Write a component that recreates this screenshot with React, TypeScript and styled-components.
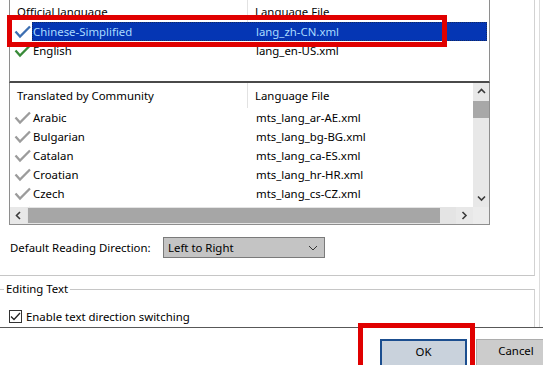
import React from "react";
import styled, { createGlobalStyle } from "styled-components";

const Global = createGlobalStyle`
  html, body { margin: 0; padding: 0; background: #ffffff; }
  body {
    font-family: "Noto Sans", "Open Sans", sans-serif;
    font-size: 11.4px;
    color: #000000;
  }
`;

const Root = styled.div`
  position: relative;
  width: 543px;
  height: 365px;
  overflow: hidden;
  background: #ffffff;
  display: flex;
  flex-direction: column;
`;

const Frame = styled.div`
  width: 540px;
  height: 327px;
  flex: none;
  box-sizing: border-box;
  border-right: 1px solid #dcdcdc;
  display: flex;
  flex-direction: column;
`;

const MainGroup = styled.div`
  width: 535px;
  height: 276px;
  flex: none;
  box-sizing: border-box;
  border-right: 1px solid #d2d2d2;
  border-bottom: 1px solid #c6c6c6;
  padding-left: 9px;
  display: flex;
  flex-direction: column;
`;

const ListBox = styled.div<{ $h: number; $thickBottom?: boolean }>`
  width: 481px;
  height: ${(p) => p.$h}px;
  flex: none;
  box-sizing: border-box;
  border-left: 1px solid #8e8e8e;
  border-right: 1px solid #8e8e8e;
  border-bottom: ${(p) => (p.$thickBottom ? "2px solid #4a4a4a" : "1px solid #8e8e8e")};
  display: flex;
  flex-direction: column;
  overflow: hidden;
  background: #ffffff;
`;

const HeaderRow = styled.div<{ $h: number }>`
  height: ${(p) => p.$h}px;
  flex: none;
  display: flex;
  align-items: center;
`;

const HeaderCell = styled.div<{ $w?: number; $divider?: boolean }>`
  ${(p) => (p.$w ? `width: ${p.$w}px; flex: none;` : "flex: 1;")}
  box-sizing: border-box;
  height: 100%;
  display: flex;
  align-items: center;
  padding-left: 7px;
  white-space: nowrap;
  border-right: ${(p) => (p.$divider ? "1px solid #e2e2e2" : "none")};
`;

const Row = styled.div`
  height: 19px;
  flex: none;
  display: flex;
  align-items: stretch;
`;

const IconCell = styled.div`
  width: 22px;
  flex: none;
  display: flex;
  align-items: center;
  padding-left: 4px;
  box-sizing: border-box;
`;

const Cells = styled.div<{ $selected?: boolean }>`
  flex: 1;
  display: flex;
  align-items: center;
  margin-right: ${(p) => (p.$selected ? "2px" : "0")};
  background: ${(p) => (p.$selected ? "#0536b4" : "transparent")};
  color: ${(p) => (p.$selected ? "#a9dbff" : "#000000")};
  outline: ${(p) => (p.$selected ? "1px dotted #102a66" : "none")};
  outline-offset: -1px;
`;

const NameCell = styled.div`
  width: 216px;
  flex: none;
  padding-left: 1px;
  box-sizing: border-box;
  white-space: nowrap;
`;

const FileCell = styled.div`
  flex: 1;
  padding-left: 8px;
  white-space: nowrap;
`;

const ListBody = styled.div`
  flex: 1;
  display: flex;
  min-height: 0;
`;

const ScrollArea = styled.div`
  flex: 1;
  display: flex;
  flex-direction: column;
  overflow: hidden;
`;

const VScroll = styled.div`
  width: 16px;
  flex: none;
  background: #e8e8e8;
  display: flex;
  flex-direction: column;
`;

const ArrowBtn = styled.div<{ $horizontal?: boolean }>`
  ${(p) => (p.$horizontal ? "width: 17px; height: 100%;" : "height: 17px; width: 100%;")}
  flex: none;
  display: flex;
  align-items: center;
  justify-content: center;
  background: #e8e8e8;
`;

const VThumb = styled.div`
  height: 17px;
  flex: none;
  margin: 1px 0 0 0;
  background: #a8a8a8;
`;

const Track = styled.div`
  flex: 1;
`;

const HScrollRow = styled.div`
  height: 17px;
  flex: none;
  display: flex;
`;

const HScroll = styled.div`
  flex: 1;
  display: flex;
  background: #e4e4e4;
`;

const HThumb = styled.div`
  width: 412px;
  flex: none;
  margin: 1px 0 1px 1px;
  background: #a6a6a6;
`;

const Corner = styled.div`
  width: 16px;
  flex: none;
  background: #ececec;
`;

const DirectionRow = styled.div`
  margin-top: 12px;
  height: 21px;
  display: flex;
  align-items: center;
`;

const DirLabel = styled.div`
  width: 154px;
  flex: none;
  padding-left: 1px;
  box-sizing: border-box;
  white-space: nowrap;
`;

const Select = styled.div`
  width: 162px;
  height: 21px;
  box-sizing: border-box;
  border: 1px solid #7a7a7a;
  background: #c4c4c4;
  display: flex;
  align-items: center;
  justify-content: space-between;
  padding: 0 6px 0 4px;
`;

const EditGroup = styled.div`
  width: 535px;
  margin-top: 5px;
  display: flex;
  flex-direction: column;
`;

const TitleRow = styled.div`
  height: 16px;
  display: flex;
`;

const LeadRule = styled.div`
  width: 4px;
  height: 8px;
  align-self: flex-end;
  border-top: 1px solid #c6c6c6;
  box-sizing: border-box;
`;

const TitleText = styled.div`
  padding: 0 2px;
  line-height: 16px;
  white-space: nowrap;
`;

const TrailRule = styled.div`
  flex: 1;
  height: 8px;
  align-self: flex-end;
  box-sizing: border-box;
  border-top: 1px solid #c6c6c6;
  border-right: 1px solid #d2d2d2;
`;

const EditBody = styled.div`
  height: 30px;
  box-sizing: border-box;
  border-right: 1px solid #d2d2d2;
  padding: 8px 0 0 9px;
  display: flex;
  align-items: center;
`;

const CheckBox = styled.div`
  width: 13px;
  height: 13px;
  box-sizing: border-box;
  border: 1px solid #333333;
  background: #ffffff;
  display: flex;
  align-items: center;
  justify-content: center;
`;

const CheckLabel = styled.div`
  margin-left: 4px;
  white-space: nowrap;
`;

const Footer = styled.div`
  flex: 1;
  border-top: 1px solid #585858;
  display: flex;
  align-items: flex-start;
  padding: 11px 0 0 380px;
  gap: 9px;
`;

const Button = styled.div<{ $default?: boolean; $w: number }>`
  width: ${(p) => p.$w}px;
  height: 30px;
  flex: none;
  box-sizing: border-box;
  display: flex;
  align-items: flex-start;
  justify-content: center;
  padding-top: 3px;
  background: ${(p) => (p.$default ? "#c9d2dc" : "#cccccc")};
  border: ${(p) => (p.$default ? "2px solid #1b4e8f" : "1px solid #adadad")};
`;

const Highlight = styled.div<{ $x: number; $y: number; $w: number; $h: number }>`
  position: absolute;
  left: ${(p) => p.$x}px;
  top: ${(p) => p.$y}px;
  width: ${(p) => p.$w}px;
  height: ${(p) => p.$h}px;
  box-sizing: border-box;
  border: 5px solid #e00000;
  pointer-events: none;
`;

const Check = ({ color }: { color: string }) => (
  <svg width="17" height="14" viewBox="0 0 17 14">
    <path d="M1.5 6.5 L6 11.5 L16 1.5" fill="none" stroke={color} strokeWidth="2.3" strokeLinejoin="miter" />
  </svg>
);

const Chevron = ({ dir }: { dir: "up" | "down" | "left" | "right" }) => {
  const pts =
    dir === "up"
      ? "1,5 4.5,1.5 8,5"
      : dir === "down"
      ? "1,1.5 4.5,5 8,1.5"
      : dir === "left"
      ? "5,1 1.5,4.5 5,8"
      : "1.5,1 5,4.5 1.5,8";
  const w = dir === "up" || dir === "down" ? 9 : 7;
  const h = dir === "up" || dir === "down" ? 7 : 9;
  return (
    <svg width={w} height={h} viewBox={`0 0 ${w} ${h}`}>
      <polyline points={pts} fill="none" stroke="#3a3a3a" strokeWidth="1.6" />
    </svg>
  );
};

const SelectChevron = () => (
  <svg width="10" height="6" viewBox="0 0 10 6">
    <polyline points="1,1 5,5 9,1" fill="none" stroke="#333" strokeWidth="1" />
  </svg>
);

const official = [
  { name: "Chinese-Simplified", file: "lang_zh-CN.xml", color: "#3d6fb2", selected: true },
  { name: "English", file: "lang_en-US.xml", color: "#388a38", selected: false },
];

const community = [
  { name: "Arabic", file: "mts_lang_ar-AE.xml" },
  { name: "Bulgarian", file: "mts_lang_bg-BG.xml" },
  { name: "Catalan", file: "mts_lang_ca-ES.xml" },
  { name: "Croatian", file: "mts_lang_hr-HR.xml" },
  { name: "Czech", file: "mts_lang_cs-CZ.xml" },
  { name: "", file: "" },
];

export default function App() {
  return (
    <>
      <Global />
      <Root>
        <Frame>
          <MainGroup>
            <ListBox $h={83} $thickBottom>
              <HeaderRow $h={22}>
                <HeaderCell $w={238} $divider>
                  Official language
                </HeaderCell>
                <HeaderCell>Language File</HeaderCell>
              </HeaderRow>
              {official.map((r) => (
                <Row key={r.name}>
                  <IconCell>
                    <Check color={r.color} />
                  </IconCell>
                  <Cells $selected={r.selected}>
                    <NameCell>{r.name}</NameCell>
                    <FileCell>{r.file}</FileCell>
                  </Cells>
                </Row>
              ))}
            </ListBox>
            <ListBox $h={142}>
              <ListBody>
                <ScrollArea>
                  <HeaderRow $h={25}>
                    <HeaderCell $w={238} $divider>
                      Translated by Community
                    </HeaderCell>
                    <HeaderCell>Language File</HeaderCell>
                  </HeaderRow>
                  {community.map((r, i) => (
                    <Row key={i}>
                      <IconCell>
                        <Check color="#9c9c9c" />
                      </IconCell>
                      <Cells>
                        <NameCell>{r.name}</NameCell>
                        <FileCell>{r.file}</FileCell>
                      </Cells>
                    </Row>
                  ))}
                </ScrollArea>
                <VScroll>
                  <ArrowBtn>
                    <Chevron dir="up" />
                  </ArrowBtn>
                  <VThumb />
                  <Track />
                  <ArrowBtn>
                    <Chevron dir="down" />
                  </ArrowBtn>
                </VScroll>
              </ListBody>
              <HScrollRow>
                <HScroll>
                  <ArrowBtn $horizontal>
                    <Chevron dir="left" />
                  </ArrowBtn>
                  <HThumb />
                  <Track />
                  <ArrowBtn $horizontal>
                    <Chevron dir="right" />
                  </ArrowBtn>
                </HScroll>
                <Corner />
              </HScrollRow>
            </ListBox>
            <DirectionRow>
              <DirLabel>Default Reading Direction:</DirLabel>
              <Select>
                <span>Left to Right</span>
                <SelectChevron />
              </Select>
            </DirectionRow>
          </MainGroup>
          <EditGroup>
            <TitleRow>
              <LeadRule />
              <TitleText>Editing Text</TitleText>
              <TrailRule />
            </TitleRow>
            <EditBody>
              <CheckBox>
                <svg width="11" height="9" viewBox="0 0 11 9">
                  <polyline points="1,4.5 4,7.5 10,1" fill="none" stroke="#222" strokeWidth="1.3" />
                </svg>
              </CheckBox>
              <CheckLabel>Enable text direction switching</CheckLabel>
            </EditBody>
          </EditGroup>
        </Frame>
        <Footer>
          <Button $default $w={87}>
            OK
          </Button>
          <Button $w={80}>Cancel</Button>
        </Footer>
        <Highlight $x={7} $y={15} $w={440} $h={32} />
        <Highlight $x={358} $y={323} $w={117} $h={50} />
      </Root>
    </>
  );
}
